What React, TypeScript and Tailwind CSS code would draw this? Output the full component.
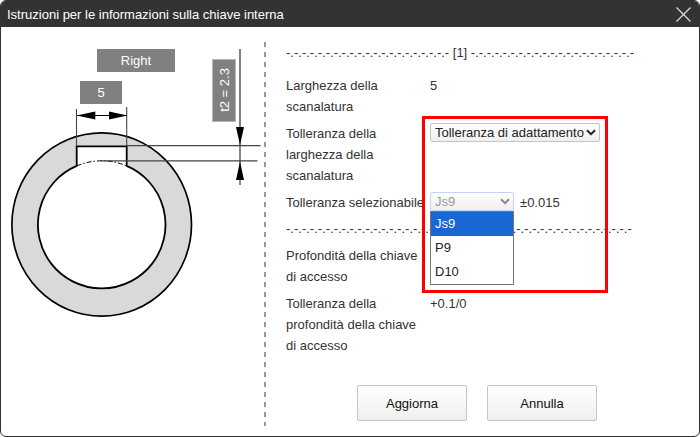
import { useState } from 'react'
import type { ReactNode, SelectHTMLAttributes } from 'react'
import clsx from 'clsx'

const tolerances = ['Js9', 'P9', 'D10']

function KeywayDrawing() {
  return (
    <svg
      viewBox="1 27 263 300"
      className="w-[263px] h-[300px] text-[13px]"
      role="img"
      aria-label="Chiave interna"
    >
      {/* Ring */}
      <ellipse cx="101.7" cy="224.5" rx="89.8" ry="91.7" fill="#d9d9d9" stroke="#000" strokeWidth="1.7" />
      <circle cx="101.7" cy="224.5" r="63.8" fill="#fff" />
      <path d="M76.7 166.2V146.3H126.7V166.2L101.7 180Z" fill="#fff" />
      <path
        d="M76.7 165.9A63.8 63.8 0 1 0 126.7 165.9V146.3H76.7Z"
        fill="none"
        stroke="#000"
        strokeWidth="1.8"
      />
      <path
        d="M76.7 165.9A63.8 63.8 0 0 1 126.7 165.9"
        fill="none"
        stroke="#000"
        strokeWidth="1"
        strokeDasharray="5 2 1.5 2"
      />

      {/* Width dimension */}
      <path d="M76.5 109V146M126.7 107V146" stroke="#444" strokeWidth="1.1" />
      <path d="M77 115.5H127" stroke="#000" strokeWidth="1" />
      <path d="M76.5 115.5L95.3 111.5V119.5Z" />
      <path d="M127.5 115.5L109 111.5V119.5Z" />

      {/* Depth dimension */}
      <path d="M127 145.7H260.5M101 160.8H257.5" stroke="#444" strokeWidth="1.2" />
      <path d="M240 49V128" stroke="#808080" strokeWidth="2" />
      <path d="M240 128V185" stroke="#444" strokeWidth="1.3" />
      <path d="M240 145L236 127H244Z" />
      <path d="M240 161.5L236 180H244Z" />

      {/* Labels */}
      <rect x="97" y="49" width="78" height="23" fill="#808080" />
      <text x="136" y="65" textAnchor="middle" fill="#fff">Right</text>
      <rect x="80" y="81" width="42" height="23" fill="#808080" />
      <text x="101" y="97" textAnchor="middle" fill="#fff">5</text>
      <rect x="212.5" y="59.5" width="23" height="62" fill="#808080" stroke="#b8b8b8" />
      <text transform="translate(229 90) rotate(-90)" textAnchor="middle" fill="#fff">t2 = 2.3</text>
    </svg>
  )
}

function Select({ className, children, ...props }: SelectHTMLAttributes<HTMLSelectElement>) {
  return (
    <div className={clsx('relative h-[19px]', className)}>
      <select
        {...props}
        className="block w-full h-full pl-1 pr-3 leading-4 appearance-none rounded-xs border border-[#c5c5c5] bg-linear-to-b from-white to-[#efefef] text-[#222] disabled:border-[#c5d3fa] disabled:text-[#999] disabled:opacity-100 peer"
      >
        {children}
      </select>
      <svg
        viewBox="0 0 10 7"
        className="absolute right-1 top-[6px] w-[10px] h-[7px] pointer-events-none text-[#222] peer-disabled:text-[#888]"
        fill="none"
        stroke="currentColor"
        strokeWidth="2"
      >
        <path d="M1 1.2L5 5.2L9 1.2" />
      </svg>
    </div>
  )
}

function Row({ label, htmlFor, children }: { label: string; htmlFor?: string; children?: ReactNode }) {
  return (
    <div className="flex items-start gap-1">
      <label htmlFor={htmlFor} className="w-[140px] shrink-0">
        {label}
      </label>
      {children}
    </div>
  )
}

export default function App() {
  const [fit, setFit] = useState('fit')
  const [tolerance, setTolerance] = useState('Js9')

  const buttonClass =
    'w-[110px] h-9 rounded-xs border border-[#c5c5c5] bg-linear-to-b from-white to-[#efefef] text-[#111]'

  return (
    <div
      role="dialog"
      aria-labelledby="dialog-title"
      className="min-h-screen flex flex-col bg-white border border-[#333] rounded-md overflow-hidden font-['Liberation_Sans',Arial,sans-serif] text-[13px] leading-[21px] text-[#333]"
    >
      <header className="h-[26px] shrink-0 flex items-center justify-between pl-[6px] pr-2 bg-[#333] text-white">
        <h1 id="dialog-title">Istruzioni per le informazioni sulla chiave interna</h1>
        <button type="button" aria-label="Chiudi">
          <svg viewBox="0 0 15 15" className="w-[15px] h-[15px]" stroke="#ddd" strokeWidth="1.2">
            <path d="M0.5 0.5L14.5 14.5M14.5 0.5L0.5 14.5" />
          </svg>
        </button>
      </header>

      <div className="flex-1 flex">
        <KeywayDrawing />
        <div className="w-[2px] shrink-0 mt-[15px] mb-[10px] bg-[repeating-linear-gradient(to_bottom,#999_0_5px,transparent_5px_10px)]" />

        <form className="flex-1 pl-5 pt-4 pb-[15px]" onSubmit={(e) => e.preventDefault()}>
          <div className="relative flex flex-col gap-[6px] whitespace-normal">
            <div className="leading-5 mb-[6px] whitespace-nowrap">
              {'-.'.repeat(20)}- [1] {'-.'.repeat(20)}-
            </div>
            <Row label="Larghezza della scanalatura">
              <output>5</output>
            </Row>
            <Row label="Tolleranza della larghezza della scanalatura" htmlFor="fit">
              <Select id="fit" className="w-[170px]" value={fit} onChange={(e) => setFit(e.target.value)}>
                <option value="fit">Tolleranza di adattamento</option>
              </Select>
            </Row>
            <Row label="Tolleranza selezionabile" htmlFor="tolerance">
              <div className="relative">
                <Select id="tolerance" className="w-[84px]" value={tolerance} disabled>
                  {tolerances.map((t) => (
                    <option key={t}>{t}</option>
                  ))}
                </Select>
                <ul
                  role="listbox"
                  aria-label="Tolleranza selezionabile"
                  className="absolute left-0 top-full z-10 w-full border border-[#767676] bg-white"
                >
                  {tolerances.map((t) => (
                    <li
                      key={t}
                      role="option"
                      aria-selected={t === tolerance}
                      onClick={() => setTolerance(t)}
                      className={clsx(
                        'px-1 leading-6',
                        t === tolerance ? 'bg-[#1967d2] text-white' : 'text-[#222]'
                      )}
                    >
                      {t}
                    </li>
                  ))}
                </ul>
              </div>
              <output className="pl-[2px]">±0.015</output>
            </Row>
            <div className="leading-5 whitespace-nowrap">{'-.'.repeat(43)}-</div>
            <Row label="Profondità della chiave di accesso" />
            <Row label="Tolleranza della profondità della chiave di accesso">
              <output>+0.1/0</output>
            </Row>

            {/* Highlight frame over the tolerance controls */}
            <div className="absolute left-[136px] top-[73px] z-20 w-[186px] h-[177px] border-3 border-[#f00] pointer-events-none" />
          </div>

          <div className="flex gap-5 mt-[29px] pl-[71px]">
            <button type="submit" className={buttonClass}>
              Aggiorna
            </button>
            <button type="button" className={buttonClass}>
              Annulla
            </button>
          </div>
        </form>
      </div>
    </div>
  )
}
